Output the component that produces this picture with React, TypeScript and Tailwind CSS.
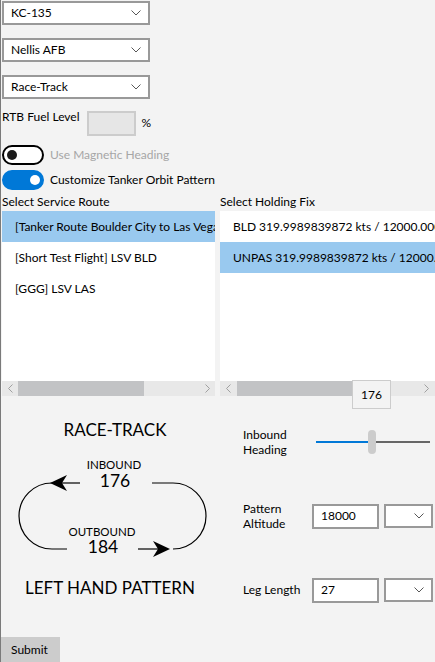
import React from 'react'

function Chevron() {
  return (
    <svg width="10" height="6" viewBox="0 0 10 6" className="shrink-0">
      <polyline points="0.5,0.5 5,5 9.5,0.5" fill="none" stroke="#444" strokeWidth="0.9" />
    </svg>
  )
}

function Combo({ value = '', className = '' }: { value?: string; className?: string }) {
  return (
    <div className={`flex h-[24px] shrink-0 items-center justify-between border-2 border-[#999] bg-white pl-[7px] pr-[7px] ${className}`}>
      <span className="whitespace-nowrap">{value}</span>
      <Chevron />
    </div>
  )
}

function ArrowGlyph({ dir }: { dir: 'left' | 'right' }) {
  const pts = dir === 'left' ? '4.5,0.5 0.5,4.5 4.5,8.5' : '0.5,0.5 4.5,4.5 0.5,8.5'
  return (
    <svg width="5" height="9" viewBox="0 0 5 9">
      <polyline points={pts} fill="none" stroke="#a0a0a0" strokeWidth="1" />
    </svg>
  )
}

function ListItem({ text, selected }: { text: string; selected?: boolean }) {
  return (
    <div
      className={`flex h-[31px] items-center overflow-hidden whitespace-nowrap pl-[13px] ${selected ? 'bg-[#99c9ef]' : ''}`}
    >
      {text}
    </div>
  )
}

function TextBox({ value }: { value: string }) {
  return (
    <div className="flex h-[25px] w-[67px] shrink-0 items-center border-2 border-[#999] bg-white pl-[7px]">
      {value}
    </div>
  )
}

export default function App() {
  return (
    <div className="relative flex h-[662px] w-[435px] flex-col overflow-hidden border-l border-[#7a7a7a] bg-[#f3f3f3] font-['Lato',sans-serif] text-[12px] leading-[16px] text-black">
      {/* top selectors */}
      <Combo value="KC-135" className="ml-px mt-px w-[148px]" />
      <Combo value="Nellis AFB" className="ml-px mt-[13px] w-[148px]" />
      <Combo value="Race-Track" className="ml-px mt-[13px] w-[148px]" />

      <div className="ml-px mt-[12px] flex h-[24px] items-start">
        <span className="-mt-[2px] whitespace-nowrap">RTB Fuel Level</span>
        <div className="ml-[7px] h-[25px] w-[49px] border-2 border-[#cccccc] bg-[#e6e6e6]" />
        <span className="ml-[6px] mt-[4px]">%</span>
      </div>

      <div className="ml-px mt-[10px] flex h-[20px] items-center gap-[6px]">
        <div className="flex h-[20px] w-[42px] items-center rounded-full border-2 border-black bg-white">
          <div className="ml-[3px] h-[10px] w-[10px] rounded-full bg-[#1a1a1a]" />
        </div>
        <span className="whitespace-nowrap text-[#a6a6a6]">Use Magnetic Heading</span>
      </div>
      <div className="ml-px mt-[5px] flex h-[20px] items-center gap-[6px]">
        <div className="flex h-[20px] w-[42px] items-center justify-end rounded-full border-2 border-[#0078d7] bg-[#0078d7] pr-[2px]">
          <div className="h-[10px] w-[10px] rounded-full bg-white" />
        </div>
        <span className="whitespace-nowrap">Customize Tanker Orbit Pattern</span>
      </div>

      {/* list boxes */}
      <div className="mt-[4px] flex">
        <div className="ml-px flex w-[213px] flex-col">
          <span className="mb-px whitespace-nowrap">Select Service Route</span>
          <div className="flex h-[170px] flex-col bg-white">
            <ListItem text="[Tanker Route Boulder City to Las Vegas]" selected />
            <ListItem text="[Short Test Flight] LSV BLD" />
            <ListItem text="[GGG] LSV LAS" />
          </div>
          <div className="flex h-[15px] bg-[#e8e8e8]">
            <div className="flex w-[16px] items-center justify-center"><ArrowGlyph dir="left" /></div>
            <div className="w-[126px] bg-[#c2c3c5]" />
            <div className="flex-1" />
            <div className="flex w-[16px] items-center justify-center"><ArrowGlyph dir="right" /></div>
          </div>
        </div>
        <div className="ml-[5px] flex min-w-0 flex-1 flex-col">
          <span className="mb-px whitespace-nowrap">Select Holding Fix</span>
          <div className="flex h-[170px] flex-col bg-white">
            <ListItem text="BLD 319.9989839872 kts / 12000.0003 ft" />
            <ListItem text="UNPAS 319.9989839872 kts / 12000.0003 ft" selected />
          </div>
          <div className="flex h-[15px] bg-[#e8e8e8]">
            <div className="flex w-[17px] items-center justify-center"><ArrowGlyph dir="left" /></div>
            <div className="w-[133px] bg-[#c2c3c5]" />
            <div className="flex-1" />
            <div className="flex w-[17px] items-center justify-center"><ArrowGlyph dir="right" /></div>
          </div>
        </div>
      </div>

      {/* pattern area */}
      <div className="flex">
        <div className="flex w-[214px] shrink-0 flex-col">
          <div className="mt-[22px] w-[228px] text-center text-[17px] leading-[24px]">RACE-TRACK</div>
          <div className="relative mt-[13px] h-[105px] w-[214px]">
            <svg width="214" height="105" viewBox="1 455 214 105" className="absolute left-0 top-0">
              <g fill="none" stroke="#000" strokeWidth="1.2">
                <path d="M80 483 H62" />
                <path d="M52 483 A33 33 0 0 0 52 549 H67" />
                <path d="M138 549 H160" />
                <path d="M152 483 H173 A33 33 0 0 1 173 549" />
              </g>
              <polygon points="50,483 67,475 62,483 67,491" fill="#000" />
              <polygon points="170,549 153,541 158,549 153,557" fill="#000" />
            </svg>
            <div className="absolute left-[63px] top-[3px] w-[100px] text-center text-[11.5px] leading-[13px]">INBOUND</div>
            <div className="absolute left-[64px] top-[17px] w-[100px] text-center text-[17.5px] leading-[18px]">176</div>
            <div className="absolute left-[51px] top-[70px] w-[100px] text-center text-[11.5px] leading-[13px]">OUTBOUND</div>
            <div className="absolute left-[52px] top-[83px] w-[100px] text-center text-[17.5px] leading-[18px]">184</div>
          </div>
          <div className="mt-[16px] w-[218px] whitespace-nowrap text-center text-[17px] leading-[24px]">LEFT HAND PATTERN</div>
        </div>

        <div className="flex flex-1 flex-col pl-[28px]">
          <div className="mt-[31px] flex h-[30px] items-center">
            <div className="w-[73px] leading-[15px]">Inbound<br />Heading</div>
            <div className="flex h-[24px] w-[114px] items-center">
              <div className="h-[2px] w-[52px] bg-[#0078d7]" />
              <div className="h-[24px] w-[8px] rounded-[4px] bg-[#cccccc]" />
              <div className="h-[2px] flex-1 bg-[#666]" />
            </div>
          </div>
          <div className="mt-[44px] flex h-[30px] items-center">
            <div className="w-[69px] leading-[15px]">Pattern<br />Altitude</div>
            <TextBox value="18000" />
            <Combo className="ml-[5px] w-[49px]" />
          </div>
          <div className="mt-[44px] flex h-[30px] items-center">
            <div className="w-[69px] whitespace-nowrap">Leg Length</div>
            <TextBox value="27" />
            <Combo className="ml-[5px] w-[49px]" />
          </div>
        </div>
      </div>

      <div className="-ml-px mt-auto flex h-[25px] w-[60px] items-center bg-[#cccccc] pl-[11px]">Submit</div>

      {/* slider value tooltip */}
      <div className="absolute left-[351px] top-[380px] flex h-[29px] w-[39px] items-center justify-center border border-[#cccccc] bg-[#f3f3f3]">
        176
      </div>
    </div>
  )
}
